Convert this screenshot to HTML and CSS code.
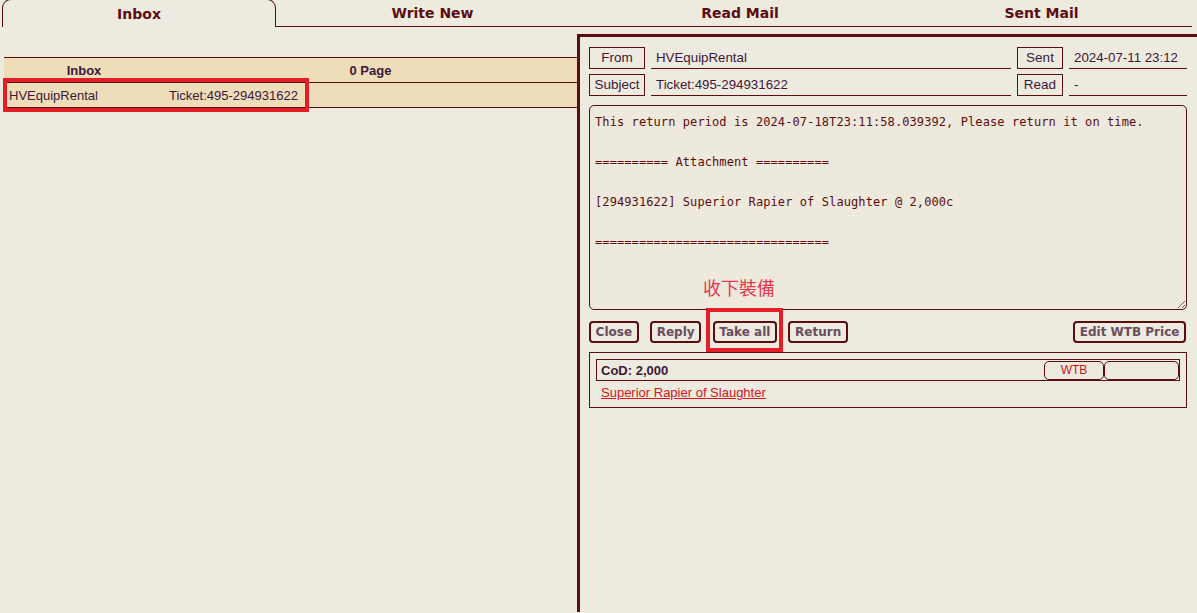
FILE: index.html
```html
<!DOCTYPE html>
<html lang="en">
<head>
    <meta charset="UTF-8">
    <title>Mail</title>
    <link rel="stylesheet" href="styles.css">
</head>
<body>
<div class="tabs">
    <div class="tab tab-inbox active">Inbox</div>
    <div class="tab tab-write">Write New</div>
    <div class="tab tab-read">Read Mail</div>
    <div class="tab tab-sent">Sent Mail</div>
</div>

<div class="main">
    <div class="list-pane">
        <table class="mail-list">
            <tr class="list-head">
                <th class="col-from">Inbox</th>
                <th>0 Page</th>
            </tr>
            <tr class="list-row">
                <td class="col-from">HVEquipRental</td>
                <td>Ticket:495-294931622</td>
            </tr>
        </table>
        <div class="mark mark-row"></div>
    </div>

    <div class="read-pane">
        <div class="meta">
            <div class="meta-label">From</div>
            <div class="meta-value">HVEquipRental</div>
            <div class="meta-label">Sent</div>
            <div class="meta-value">2024-07-11 23:12</div>
            <div class="meta-label">Subject</div>
            <div class="meta-value">Ticket:495-294931622</div>
            <div class="meta-label">Read</div>
            <div class="meta-value">-</div>
        </div>

        <textarea class="body-text" readonly>This return period is 2024-07-18T23:11:58.039392, Please return it on time.

========== Attachment ==========

[294931622] Superior Rapier of Slaughter @ 2,000c

================================</textarea>

        <div class="actions">
            <button class="btn">Close</button>
            <button class="btn">Reply</button>
            <button class="btn">Take all</button>
            <button class="btn">Return</button>
            <button class="btn btn-right">Edit WTB Price</button>
        </div>

        <div class="attachments">
            <div class="cod-row">
                <span class="cod-text">CoD: 2,000</span>
                <span class="wtb">WTB</span>
                <span class="wtb-input"></span>
            </div>
            <a class="item-link" href="#">Superior Rapier of Slaughter</a>
        </div>

        <div class="note">收下裝備</div>
        <div class="mark mark-take"></div>
    </div>
</div>
</body>
</html>
```

FILE: styles.css
```css
body {
    margin: 0;
    background-color: #edeadf;
    color: #5c0d11;
    font-family: "Liberation Sans", Arial, sans-serif;
    font-size: 13px;
    overflow: hidden;
    height: 613px;
}

/* tabs */
.tabs {
    display: flex;
    margin-top: -1px;
    height: 28px;
}

.tab {
    box-sizing: border-box;
    height: 28px;
    line-height: 29px;
    text-align: center;
    font-family: "DejaVu Sans", sans-serif;
    font-weight: bold;
    font-size: 14px;
    border-bottom: 1px solid #5c0d11;
}

.tab-inbox {
    margin-left: 2px;
    width: 274px;
    border: 1px solid #5c0d11;
    border-bottom: none;
    border-radius: 9px 9px 0 0;
}

.tab-write { width: 313px; }
.tab-read { width: 302px; }
.tab-sent { width: 301px; }

.main {
    display: flex;
}

/* left list */
.list-pane {
    position: relative;
    width: 577px;
    box-sizing: border-box;
    padding: 30px 0 0 4px;
}

.mail-list {
    width: 100%;
    border-collapse: collapse;
    background-color: #eeddb9;
    color: #3d1838;
}

.mail-list th,
.mail-list td {
    height: 24px;
    padding: 0 5px;
    border-top: 1px solid #5c0d11;
    border-bottom: 1px solid #5c0d11;
    text-align: left;
}

.mail-list th {
    text-align: center;
    font-weight: bold;
}

.mail-list .col-from {
    width: 150px;
}

/* read pane */
.read-pane {
    position: relative;
    flex: 1;
    margin-top: 7px;
    height: 578px;
    box-sizing: border-box;
    border-top: 3px solid #5c0d11;
    border-left: 3px solid #5c0d11;
    padding: 10px 10px 0 9px;
}

.meta {
    display: grid;
    grid-template-columns: 56px 360px 46px 118px;
    column-gap: 6px;
    row-gap: 5px;
}

.meta-label {
    height: 22px;
    box-sizing: border-box;
    border: 1px solid #5c0d11;
    line-height: 20px;
    text-align: center;
    font-size: 13.5px;
    color: #3d1838;
}

.meta-value {
    height: 22px;
    box-sizing: border-box;
    border-bottom: 1px solid #5c0d11;
    line-height: 21px;
    padding-left: 5px;
    font-size: 13.3px;
    color: #3d1838;
}

.body-text {
    display: block;
    margin-top: 9px;
    width: 598px;
    height: 205px;
    box-sizing: border-box;
    padding: 6px 5px;
    border: 1px solid #5c0d11;
    border-radius: 5px;
    background-color: #ede9dc;
    color: #5c0d11;
    font-family: "DejaVu Sans Mono", monospace;
    font-size: 12px;
    letter-spacing: 0.09px;
    line-height: 20px;
    resize: both;
    outline: none;
}

.actions {
    display: flex;
    margin-top: 11px;
    width: 598px;
}

.btn {
    height: 22px;
    box-sizing: border-box;
    margin-right: 11.5px;
    padding: 0 4.6px;
    border: 2px solid #5c0d11;
    border-radius: 4px;
    background-color: #edeadf;
    color: #6a4c5e;
    font-family: "DejaVu Sans", sans-serif;
    font-weight: bold;
    font-size: 12px;
    cursor: pointer;
}

.btn-right {
    margin-left: auto;
    margin-right: 1px;
}

.attachments {
    margin-top: 9px;
    width: 598px;
    height: 56px;
    box-sizing: border-box;
    border: 1px solid #5c0d11;
    padding: 6px 6px 0 6px;
}

.cod-row {
    display: flex;
    align-items: center;
    height: 22px;
    box-sizing: border-box;
    border: 1px solid #5c0d11;
    color: #3d1838;
    font-size: 13px;
    font-weight: bold;
}

.cod-text {
    flex: 1;
    padding-left: 4px;
}

.wtb,
.wtb-input {
    height: 19px;
    box-sizing: border-box;
    border: 1px solid #5c0d11;
    border-radius: 5px;
    line-height: 17px;
    text-align: center;
    font-size: 12px;
    font-weight: normal;
    color: #c8141e;
}

.wtb { width: 60px; }

.wtb-input {
    width: 75px;
}

.item-link {
    display: inline-block;
    margin: 4px 0 0 5px;
    color: #d8141c;
    font-size: 13px;
}

/* annotations */
.mark {
    position: absolute;
    border: 4px solid #e41e26;
    box-sizing: border-box;
}

.mark-row {
    left: 3px;
    top: 51px;
    width: 306px;
    height: 34px;
}

.mark-take {
    left: 126px;
    top: 271px;
    width: 77px;
    height: 44px;
}

.note {
    position: absolute;
    left: 123px;
    top: 240px;
    font-family: "Noto Sans CJK TC", sans-serif;
    font-size: 18px;
    line-height: 20px;
    color: #e6364a;
}
```
